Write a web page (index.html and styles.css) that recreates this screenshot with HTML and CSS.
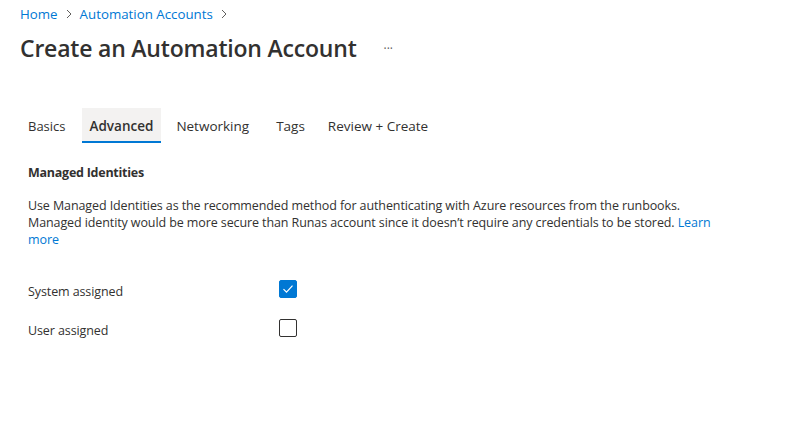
FILE: index.html
```html
<!DOCTYPE html>
<html>
<head>
<meta charset="utf-8">
<link rel="stylesheet" href="styles.css">
</head>
<body>
<div class="page">
  <nav class="crumbs">
    <a class="crumb">Home</a>
    <svg class="chev" width="8" height="10" viewBox="0 0 8 10"><path d="M2 1l4 4-4 4" fill="none" stroke="#605e5c" stroke-width="1"/></svg>
    <a class="crumb">Automation Accounts</a>
    <svg class="chev" width="8" height="10" viewBox="0 0 8 10"><path d="M2 1l4 4-4 4" fill="none" stroke="#605e5c" stroke-width="1"/></svg>
  </nav>
  <div class="titlebar">
    <h1 class="title">Create an Automation Account</h1>
    <span class="more-btn">···</span>
  </div>
  <div class="tabs">
    <div class="tab t-basics">Basics</div>
    <div class="tab active">Advanced</div>
    <div class="tab t-net">Networking</div>
    <div class="tab t-tags">Tags</div>
    <div class="tab">Review + Create</div>
  </div>
  <section class="content">
    <h2 class="section-title">Managed Identities</h2>
    <p class="desc">Use Managed Identities as the recommended method for authenticating with Azure resources from the runbooks. Managed identity would be more secure than Runas account since it doesn’t require any credentials to be stored. <a class="link">Learn more</a></p>
    <div class="row first">
      <span class="label">System assigned</span>
      <span class="box checked"><svg width="12" height="10" viewBox="0 0 12 10"><path d="M1.5 5.2l3 3 6-6.5" fill="none" stroke="#fff" stroke-width="1.2"/></svg></span>
    </div>
    <div class="row">
      <span class="label">User assigned</span>
      <span class="box"></span>
    </div>
  </section>
</div>
</body>
</html>
```

FILE: styles.css
```css
* { box-sizing: border-box; }
html, body { margin: 0; padding: 0; background: #fff; }
body {
  font-family: "Open Sans", "Noto Sans", "Liberation Sans", sans-serif;
  color: #323130;
  width: 807px;
  height: 438px;
  overflow: hidden;
}
.page { padding: 4px 0 0 20px; }
.crumbs {
  display: flex;
  align-items: center;
  gap: 7px;
  height: 19px;
  font-size: 13.3px;
}
.crumb { color: #0078d4; }
.chev { margin-top: 1px; }
.titlebar {
  display: flex;
  align-items: center;
  margin-top: 10px;
  height: 30px;
}
.title {
  margin: 0;
  font-size: 23px;
  font-weight: 600;
  color: #323130;
  letter-spacing: -0.2px;
}
.more-btn {
  margin-left: 27px;
  font-size: 12px;
  color: #605e5c;
}
.tabs {
  display: flex;
  margin-top: 45px;
  height: 35px;
}
.tab {
  padding: 3px 8px 0 8px;
  display: flex;
  align-items: center;
  font-size: 13.5px;
  color: #323130;
  margin-right: 9px;
  border-bottom: 2px solid transparent;
  height: 35px;
}
.tab.t-basics { font-size: 13px; margin-right: 8px; }
.tab.active {
  background: #f3f2f1;
  font-weight: 600;
  border-bottom-color: #0078d4;
  margin-right: 7px;
}
.tab.t-net { margin-right: 11px; }
.tab.t-tags { margin-right: 7px; }
.content { padding-left: 8px; }
.section-title {
  margin: 21px 0 0 0;
  font-size: 12.5px;
  font-weight: 700;
  letter-spacing: -0.25px;
  line-height: 18px;
}
.desc {
  margin: 15px 0 0 0;
  width: 700px;
  font-size: 12.5px;
  letter-spacing: -0.1px;
  line-height: 17px;
}
.link { color: #0078d4; }
.row {
  display: flex;
  align-items: center;
  height: 39px;
}
.row.first { margin-top: 21px; }
.label {
  width: 251px;
  font-size: 12.5px;
  letter-spacing: -0.1px;
  padding-top: 6px;
}
.box {
  width: 18px;
  height: 18px;
  border: 1px solid #323130;
  border-radius: 2px;
  display: flex;
  align-items: center;
  justify-content: center;
}
.box.checked {
  background: #0078d4;
  border-color: #0078d4;
}
```
